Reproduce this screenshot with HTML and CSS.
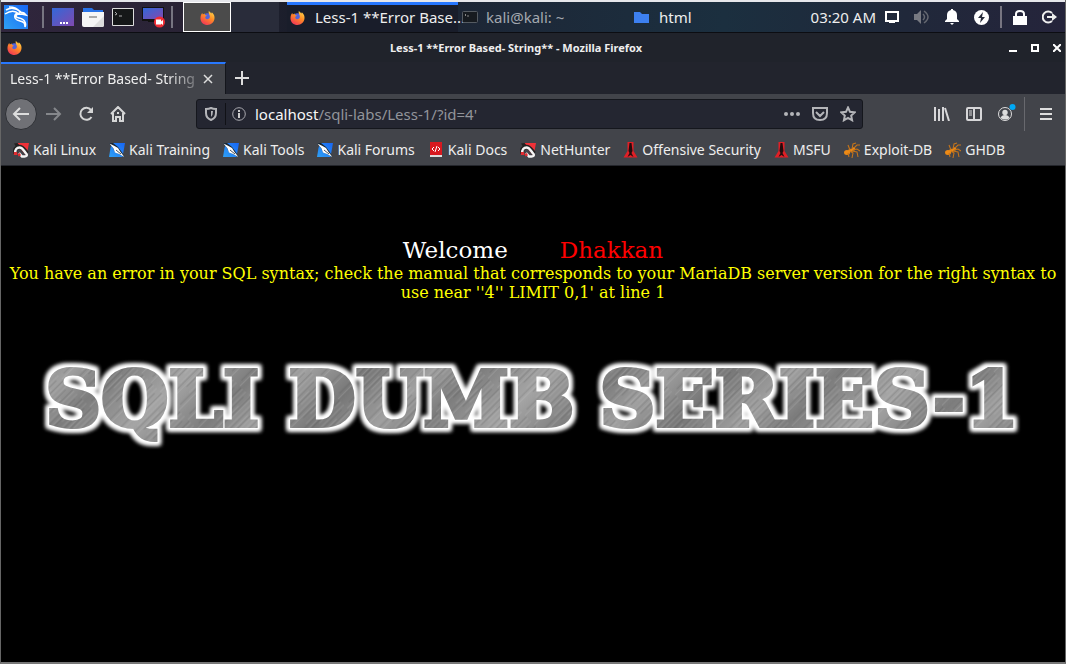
FILE: index.html
```
<!DOCTYPE html>
<html lang="en">
<head>
<meta charset="utf-8">
<title>Less-1 **Error Based- String**</title>
<link rel="stylesheet" href="styles.css">
</head>
<body>
<svg class="symbols" aria-hidden="true">
  <defs>
    <linearGradient id="flame" x1="0.8" y1="0" x2="0.2" y2="1"><stop offset="0" stop-color="#ffd84a"/><stop offset=".45" stop-color="#ff8a26"/><stop offset="1" stop-color="#f0305a"/></linearGradient>
    <linearGradient id="desk" x1="0" y1="0" x2="1" y2="1"><stop offset="0" stop-color="#3268d8"/><stop offset="1" stop-color="#8049b0"/></linearGradient>
    <linearGradient id="blue" x1="0" y1="1" x2="1" y2="0"><stop offset="0" stop-color="#2fa0f4"/><stop offset="1" stop-color="#1766f5"/></linearGradient>
  </defs>
  <symbol id="firefox" viewBox="0 0 16 16">
    <circle cx="8" cy="8.5" r="5" fill="#5464d8"/>
    <path d="M2.4 3.2 3 4.7l2-1 .3 1.6 2 .6-1.5 1.3c-.8 1 .2 2.8 2 2.7 2.4-.1 3.2-2.3 2.5-4C9.8 4.5 8.800 3.500 9.400.8c.7 1.300 2 1.800 2.800 3l.4-1.300c2.300 2 3.300 4.400 2.800 7.200C14.700 13.400 11.600 16 8 16 3.900 16 .5 12.900.5 8.700.5 6.500 1.200 4.700 2.400 3.200z" fill="url(#flame)"/>
  </symbol>
  <symbol id="magnet" viewBox="0 0 16 16">
    <path d="M4 1h12l-2.500 13L9 9z" fill="#f03138"/>
    <path d="M1 1.500 4.500 1 8 5 4 6z" fill="#222"/>
    <path d="M2.500 11.500C1 7.500 3.500 5 6.500 5c3.500 0 4.500 3 7.500 6.500" fill="none" stroke="#242424" stroke-width="4.500"/>
    <path d="M2.500 11C1.500 7.500 4 5.500 6.500 5.500c3.500 0 4.500 4 7 6.500 1 1.500 0 2.500-2 2.500H9L6 11" fill="none" stroke="#f5f5f5" stroke-width="2.400"/>
    <path d="M.8 10h3.400v3H.8zM4.500 12l2.500-1 1 2.500-2.500 1z" fill="#e02c31"/>
  </symbol>
  <symbol id="blade" viewBox="0 0 16 16">
    <path d="M3 1h13l-2.500 14H0L1.500 6z" fill="url(#blue)"/>
    <path d="M0 1l4 0 5 4 3 4 4 6-6-3-4-2-2-4z" fill="#182632"/>
    <path d="M.5 1.500 5.500 4l3.500 2 2.500 4L15.500 15l-5.500-3-4-1.500-1.500-4z" fill="#fff"/><path d="m7 8 5 4" stroke="#47505b"/>
  </symbol>
  <symbol id="needle" viewBox="0 0 14 16"><path d="M4 0h6v9l4 6.500H0L4 9z" fill="#e01f26"/><path d="M6 1h2l1 8-1 2 2 4-3-2-3 2 2-4-1-2z" fill="#230c0d"/></symbol>
  <symbol id="ant" viewBox="0 0 16 16"><g fill="#ed8a16"><ellipse cx="3" cy="10.500" rx="3" ry="2.500"/><ellipse cx="6.500" cy="8.500" rx="2.300" ry="1.700"/><circle cx="9.500" cy="7" r="1.800"/></g><path d="M6 8 4 3M8 7l1-5 3-1M10 6l3-3h3M9 8l4-1 3 2M8 9l5 1 1 5M6 9l3 2-1 5M4 11l1 4" fill="none" stroke="#c5741a" stroke-width="1.100"/></symbol>
</svg>

<div class="desktop">
  <div class="host-edge"></div>
  <header class="panel">
    <nav class="launchers" aria-label="Launchers">
      <button class="plain" aria-label="Applications"><svg width="24" height="24" viewBox="0 0 24 24"><path fill="url(#blue)" d="M0 0h24v24H0z"/><path d="M2 5c5-3 10-2 15 2M1 9c6-4 11-3 14 0M5 2c5 0 9 2 11 5l4 1 2 2-5-1c-3 0-5 0-5 2 0 3 7 1 9 6 1 2 1 3 0 5 0-5-2-5-5-6-4-1-6-3-5-6 1-2 3-2 5-2" fill="none" stroke="#fff" stroke-width="1.500"/></svg></button>
      <span class="bar bar-first"></span>
      <button class="plain" aria-label="Show desktop"><svg width="22" height="18"><path fill="url(#desk)" d="M0 0h22v18H0z"/><path d="M8 15h2m1 0h2m1 0h2" stroke="#fff" stroke-width="2"/></svg></button>
      <button class="plain" aria-label="Files"><svg width="22" height="20"><path d="M1 1h9l2 2h9v7H1z" fill="#2873e8"/><path d="M0 5h22v13q0 2-2 2H2q-2 0-2-2z" fill="#f5f5f5"/><path d="m22 9v9q0 2-2 2h-9z" fill="#ddd"/><path d="M7 10h8" stroke="#aaa" stroke-width="2"/></svg></button>
      <button class="plain" aria-label="Terminal"><svg width="22" height="18"><path d="M.5.500h21v17H.5z" fill="#151718" stroke="#ddd"/><path d="m3 4 2 2-2 1m4 1h3" fill="none" stroke="#aaa"/></svg></button>
      <button class="plain" aria-label="Screen recorder"><svg width="24" height="22" viewBox="0 0 24 22"><path fill="#111" d="M0 1h22v14H0zM6 15h10v1H6z"/><path fill="url(#desk)" d="M1 2h20v11H1z"/><circle cx="17.500" cy="16" r="5.500" fill="#f02d35"/><path d="M14 13.500h5v2l2-1.500v5l-2-1.500v1h-5z" fill="#fff"/></svg></button>
      <span class="bar"></span>
    </nav>
    <button class="workspace active" aria-label="Workspace 1"><svg width="15" height="15"><use href="#firefox"/></svg></button>
    <button class="workspace" aria-label="Workspace 2"></button>
    <div class="tasks">
      <button class="task current"><svg width="15" height="15"><use href="#firefox"/></svg><span>Less-1 **Error Base...</span></button>
      <button class="task dim"><svg width="16" height="12"><rect x=".5" y=".5" width="15" height="11" rx="1" fill="#171b20" stroke="#555b62"/><path d="m3 3 1 1-1 1m2 0h2" fill="none" stroke="#888"/></svg><span>kali@kali: ~</span></button>
      <button class="task folder"><svg width="15" height="11"><path d="M0 0h6l2 2h7v9H0z" fill="#3d80f0"/></svg><span>html</span></button>
    </div>
    <div class="tray">
      <time>03:20 AM</time>
      <svg width="14" height="12" fill="none" stroke="#fff" stroke-width="2"><path d="M1 1h12v9H1z"/><path d="M4 11h6"/></svg>
      <svg width="16" height="14" fill="#777981"><path d="M0 4h3l4-4v14l-4-4H0z"/><path d="M9 4q3 3 0 6M10 1q8 6 0 12" fill="none" stroke="#656871" stroke-width="1.500"/></svg>
      <svg width="14" height="16" fill="#fff"><path d="M6 0h2v1q4 1 4 5v4l2 2v1H0v-1l2-2V6q0-4 4-5zM5 14h4l-2 2z"/></svg>
      <svg width="15" height="15"><circle cx="7.500" cy="7.500" r="7.500" fill="#fff"/><path d="m9 2-5 6h3l-1 5 5-6H8z" fill="#262a39"/></svg>
      <span class="bar"></span>
      <svg width="14" height="15"><path d="M0 6h14v9H0z" fill="#fff"/><path d="M3 7V4q0-3 4-3t4 3v3" fill="none" stroke="#fff" stroke-width="2"/></svg>
      <svg width="15" height="14" fill="none" stroke="#eee" stroke-width="2"><path d="M10 3A5.500 5.500 0 1 0 10 11M5 7h6"/><path d="m10 3 5 4-5 4z" fill="#eee" stroke="none"/></svg>
    </div>
  </header>

  <main class="window">
    <div class="titlebar">
      <svg width="15" height="15"><use href="#firefox"/></svg>
      <div class="window-title">Less-1 **Error Based- String** - Mozilla Firefox</div>
      <div class="window-controls">
        <button class="plain" aria-label="Minimize"><svg width="8" height="8"><path d="M0 6h8v2H0z" fill="#fff"/></svg></button>
        <button class="plain" aria-label="Maximize"><svg width="8" height="8"><path d="M1 1h6v6H1z" fill="none" stroke="#fff" stroke-width="2"/></svg></button>
        <button class="plain" aria-label="Close window"><svg width="8" height="8"><path d="m0 0 8 8m0-8L0 8" stroke="#fff" stroke-width="2"/></svg></button>
      </div>
    </div>
    <div class="tabs">
      <div class="tab"><span>Less-1 **Error Based- String</span><button class="plain" aria-label="Close tab"><svg width="10" height="10"><path d="m1 1 8 8m0-8L1 9" stroke="#ddd" stroke-width="1.500"/></svg></button></div>
      <button class="plain new-tab" aria-label="New tab"><svg width="14" height="14"><path d="M7 0v14M0 7h14" stroke="#ddd" stroke-width="2"/></svg></button>
    </div>
    <div class="toolbar">
      <div class="history">
        <button class="back" aria-label="Back"><svg width="18" height="16" fill="none" stroke="#ddd" stroke-width="2"><path d="M17 8H2m6-6L2 8l6 6"/></svg></button>
        <button class="plain" aria-label="Forward"><svg width="16" height="16" fill="none" stroke="#85878b" stroke-width="2"><path d="M0 8h14M8 2l6 6-6 6"/></svg></button>
        <button class="plain" aria-label="Reload"><svg width="16" height="16" fill="none" stroke="#d5d6d6" stroke-width="2"><path d="M13 4A6 6 0 1 0 13.500 11"/><path d="M15 1v6H9z" fill="#d5d6d6" stroke="none"/></svg></button>
        <button class="plain" aria-label="Home"><svg width="16" height="16" fill="none" stroke="#d5d6d6" stroke-width="2"><path d="M1 8 8 1l7 7M3 7v8h3v-4h4v4h3V7"/><path d="M7 7h2"/></svg></button>
      </div>
      <div class="address">
        <svg class="shield" width="12" height="14" fill="none" stroke="#b4b5b9" stroke-width="2"><path d="M1 2q3 0 5-1 2 1 5 1v4q0 5-5 7-5-2-5-7z"/><path d="M6 4v6q2-2 2-6z" fill="#b4b5b9" stroke="none"/></svg>
        <span class="address-rule"></span>
        <svg width="14" height="14"><circle cx="7" cy="7" r="6.300" fill="none" stroke="#aaaab0"/><path d="M7 3v2m0 1v5" stroke="#ccc" stroke-width="2"/></svg>
        <div class="url" role="textbox" aria-label="Address" contenteditable="true"><b>localhost</b>/sqli-labs/Less-1/?id=4'</div>
        <button class="plain" aria-label="Page actions"><svg width="16" height="4" fill="#b4b5b9"><circle cx="2" cy="2" r="2"/><circle cx="8" cy="2" r="2"/><circle cx="14" cy="2" r="2"/></svg></button>
        <button class="plain" aria-label="Save to Pocket"><svg width="16" height="14" fill="none" stroke="#b4b5b9" stroke-width="2"><path d="M1 1h14v5q0 7-7 7T1 6zM4 5l4 4 4-4"/></svg></button>
        <button class="plain" aria-label="Bookmark page"><svg width="16" height="16"><path d="m8 1.500 2 4.300 4.700.6-3.500 3.200.9 4.700L8 12l-4.100 2.300.9-4.700-3.500-3.200L6 5.800z" fill="none" stroke="#b4b5b9" stroke-width="2"/></svg></button>
      </div>
      <div class="tools">
        <button class="plain" aria-label="Library"><svg width="16" height="14" stroke="#d7d7d9" stroke-width="2"><path d="M1 0v14M5 2v12M9 0v14M11 1l4 13"/></svg></button>
        <button class="plain" aria-label="Sidebar"><svg width="16" height="14" fill="none" stroke="#d7d7d9" stroke-width="2"><rect x="1" y="1" width="14" height="12" rx="1"/><path d="M8 1v12"/><path d="M3 4h3M3 6h3M3 8h3" stroke-width="1"/></svg></button>
        <button class="plain" aria-label="Account"><svg width="18" height="20"><g transform="translate(0 3)"><circle cx="7" cy="7" r="6.500" fill="none" stroke="#ddd"/><circle cx="7" cy="5.500" r="2.700" fill="#ddd"/><path d="M2.500 11q1-3 4.500-3t4.500 3q-4 3-9 0z" fill="#ddd"/></g><circle cx="14.500" cy="3" r="3" fill="#00a8f5"/></svg></button>
        <span class="tool-rule"></span>
        <button class="plain" aria-label="Menu"><svg width="12" height="12"><path d="M0 1h12M0 6h12M0 11h12" stroke="#ddd" stroke-width="2"/></svg></button>
      </div>
    </div>
    <nav class="bookmarks" aria-label="Bookmarks">
      <a href="#"><svg width="16" height="16"><use href="#magnet"/></svg>Kali Linux</a>
      <a href="#"><svg width="16" height="16"><use href="#blade"/></svg>Kali Training</a>
      <a href="#"><svg width="16" height="16"><use href="#blade"/></svg>Kali Tools</a>
      <a href="#"><svg width="16" height="16"><use href="#blade"/></svg>Kali Forums</a>
      <a href="#"><svg width="16" height="16"><path d="M2 0h12v14H2z" fill="#d71920"/><path d="M2 13h12v2H2z" fill="#ddd"/><path d="m6 5-2 2 2 2m4-4 2 2-2 2M9 4 7 10" fill="none" stroke="#fff"/></svg>Kali Docs</a>
      <a href="#"><svg width="16" height="16"><use href="#magnet"/></svg>NetHunter</a>
      <a href="#"><svg width="15" height="16"><use href="#needle"/></svg>Offensive Security</a>
      <a href="#"><svg width="15" height="16"><use href="#needle"/></svg>MSFU</a>
      <a href="#"><svg width="16" height="16"><use href="#ant"/></svg>Exploit-DB</a>
      <a href="#"><svg width="16" height="16"><use href="#ant"/></svg>GHDB</a>
    </nav>
    <section class="page">
      <div class="welcome"><span>Welcome</span><span class="name">Dhakkan</span></div>
      <p class="error">You have an error in your SQL syntax; check the manual that corresponds to your MariaDB server version for the right syntax to use near ''4'' LIMIT 0,1' at line 1</p>
      <svg class="banner" viewBox="0 0 1000 100">
        <defs>
          <linearGradient id="metal" x1="0" y1="0" x2="90" y2="90" gradientUnits="userSpaceOnUse" spreadMethod="reflect"><stop offset="0" stop-color="#777"/><stop offset=".35" stop-color="#a0a0a0"/><stop offset=".6" stop-color="#7c7c7c"/><stop offset="1" stop-color="#a5a5a5"/></linearGradient>
          <pattern id="brushed" width="1000" height="100" patternUnits="userSpaceOnUse"><path d="M0 0h1000v100H0z" fill="url(#metal)"/><path d="M0 0h1000v100H0z" fill="url(#scratches)"/></pattern>
          <pattern id="scratches" width="13" height="60" patternUnits="userSpaceOnUse" patternTransform="rotate(45)"><path d="M1 0v40M6 15v45M10 0v30" stroke="#c8c8c8" stroke-width=".6" opacity=".4"/><path d="M3 5v50M8 0v38" stroke="#444" stroke-width=".6" opacity=".4"/></pattern>
          <filter id="glow" x="-3%" y="-30%" width="106%" height="160%" color-interpolation-filters="sRGB">
            <feMorphology in="SourceAlpha" operator="dilate" radius="3" result="wide"/>
            <feGaussianBlur in="wide" stdDeviation="2" result="soft"/>
            <feFlood flood-color="#fff"/><feComposite in2="soft" operator="in" result="halo"/>
            <feMorphology in="SourceAlpha" operator="dilate" radius="1" result="edge"/>
            <feFlood flood-color="#fff"/><feComposite in2="edge" operator="in" result="rim"/>
            <feMerge><feMergeNode in="halo"/><feMergeNode in="halo"/><feMergeNode in="rim"/><feMergeNode in="SourceGraphic"/></feMerge>
          </filter>
        </defs>
        <text class="banner-text" y="79" filter="url(#glow)"><tspan x="15">SQLI</tspan><tspan x="257">DUMB</tspan><tspan x="566">SERIES-1</tspan></text>
      </svg>
    </section>
  </main>
</div>
</body>
</html>
```
FILE: styles.css
```
* { box-sizing: border-box; }
body { margin: 0; background: #000; color: #eee; font: 15px/20px "Noto Sans", sans-serif; }
svg { display: block; flex: none; }
button { font: inherit; color: inherit; border: 0; padding: 0; background: none; }
.symbols { position: absolute; width: 0; height: 0; }
.desktop { min-height: 100vh; display: flex; flex-direction: column; border: 1px solid #666; border-top: 0; border-bottom: 2px solid #777; }
.host-edge { height: 2px; background: #e6e7eb; }
.panel { height: 31px; display: flex; align-items: stretch; background: linear-gradient(90deg, #30263d 0, #292335 17%, #1b1e2b 27%, #1d2939 50%, #1b2f3f 68%, #20283a 85%, #25243b); border-bottom: 1px solid #0c0d12; }
.launchers { display: flex; align-items: center; gap: 8px; padding-left: 3px; width: 182px; flex: none; }
.plain { display: flex; align-items: center; justify-content: center; flex: none; }
.bar { width: 2px; height: 22px; background: #777581; flex: none; }
.launchers .bar-first { margin-left: 6px; }
.launchers .bar:last-child { margin-left: -3px; }
.workspace { width: 48px; display: flex; align-items: center; justify-content: center; background: #292c3a; flex: none; }
.workspace.active { background: #4b4b4b; border: 1px solid #fff; }
.tasks { display: flex; flex: 1; margin-left: 8px; min-width: 0; }
.task { width: 171px; display: flex; align-items: center; gap: 10px; padding: 0 4px; white-space: nowrap; flex: none; }
.task.current { background: #191d2a; border-top: 3px solid #2777ff; padding: 0 0 3px 3px; }
.task.dim { color: #a3a8af; gap: 8px; }
.task.folder { padding-left: 5px; }
.tray { display: flex; align-items: center; gap: 15px; padding-right: 8px; flex: none; }
.tray time { margin-right: -6px; }
.tray .bar { margin: 0 -4px; }
.titlebar { height: 29px; display: grid; grid-template-columns: 60px 1fr 60px; align-items: center; padding: 0 4px 0 6px; background: #20232b; }
.window-title { text-align: center; font-weight: bold; font-size: 11px; padding-right: 36px; }
.window-controls { display: flex; gap: 14px; justify-content: flex-end; }
.tabs { height: 32px; display: flex; background: #22242d; }
.tab { width: 225px; display: flex; align-items: center; gap: 4px; padding: 0 12px 0 9px; background: #42444a; border-top: 2px solid #2878ff; border-right: 1px solid #14161c; font-size: 14px; }
.tab span { flex: 1; overflow: hidden; white-space: nowrap; mask-image: linear-gradient(90deg, #000 83%, #0003); }
.new-tab { width: 32px; }
.window { flex: 1; display: flex; flex-direction: column; }
.toolbar { height: 40px; display: flex; align-items: center; background: #42444a; padding: 0 13px 0 4px; }
.history { display: flex; align-items: center; gap: 16px; width: 191px; flex: none; }
.back { width: 32px; height: 32px; border-radius: 50%; border: 1px solid #2e3035; background: #707176; display: flex; align-items: center; justify-content: center; }
.history .back { margin-right: -7px; }
.address { height: 30px; flex: 1; display: flex; align-items: center; gap: 12px; padding: 0 6px 0 8px; background: #242631; border: 1px solid #15171d; border-radius: 3px; }
.address-rule { width: 1px; height: 22px; background: #101116; margin-right: -6px; }
.address .shield { margin-right: -4px; }
.url { flex: 1; color: #92949a; font-size: 15px; margin-left: -3px; white-space: nowrap; }
.url b { color: #f7f7f7; font-weight: normal; }
.tools { width: 189px; display: flex; align-items: center; justify-content: flex-end; gap: 16px; flex: none; }
.tool-rule { width: 1px; height: 34px; background: #68696e; margin-left: -8px; margin-right: -1px; }
.bookmarks { height: 32px; display: flex; align-items: center; gap: 13px; padding: 0 12px; background: #42444a; border-bottom: 1px solid #24262c; white-space: nowrap; overflow: hidden; font-size: 14px; }
.bookmarks a { display: flex; align-items: center; gap: 4px; color: inherit; text-decoration: none; }
.page { flex: 1; background: #000; padding: 71px 8px 8px; text-align: center; font: 16px/19px "DejaVu Serif", serif; }
.welcome { display: flex; justify-content: center; gap: 52px; font-size: 23px; line-height: 26px; padding-bottom: 1px; color: #fff; }
.name { color: #f00; }
.error { margin: 0 0 45px; color: #ff0; }
.banner { width: 96%; margin: 0 auto; overflow: visible; }
.banner-text { font: bold 77px "DejaVu Serif", serif; fill: url(#brushed); stroke: url(#brushed); stroke-width: 4px; }
```
